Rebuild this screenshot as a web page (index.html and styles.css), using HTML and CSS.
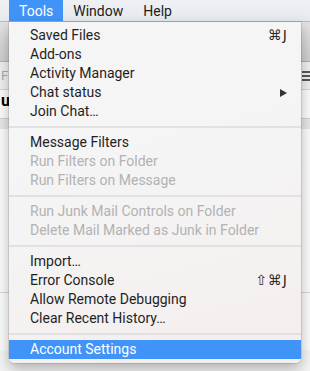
FILE: index.html
```html
<!DOCTYPE html>
<html lang="en">
<head>
  <meta charset="UTF-8">
  <title>Tools menu</title>
  <link rel="stylesheet" href="styles.css">
</head>
<body>
  <div class="menubar">
    <span class="menu-title active">Tools</span>
    <span class="menu-title">Window</span>
    <span class="menu-title">Help</span>
  </div>

  <div class="window">
    <div class="toolbar"></div>
    <div class="searchrow">
      <span class="search-text">Fil</span>
      <span class="hamburger"><i></i><i></i><i></i></span>
    </div>
    <div class="content">
      <div class="heading">u</div>
      <div class="band"></div>
      <div class="list-line"></div>
    </div>
  </div>

  <div class="menu">
    <div class="item">Saved Files<span class="key">⌘J</span></div>
    <div class="item">Add-ons</div>
    <div class="item">Activity Manager</div>
    <div class="item">Chat status<span class="arrow"></span></div>
    <div class="item">Join Chat…</div>
    <div class="sep"></div>
    <div class="item">Message Filters</div>
    <div class="item disabled">Run Filters on Folder</div>
    <div class="item disabled">Run Filters on Message</div>
    <div class="sep"></div>
    <div class="item disabled">Run Junk Mail Controls on Folder</div>
    <div class="item disabled">Delete Mail Marked as Junk in Folder</div>
    <div class="sep"></div>
    <div class="item">Import…</div>
    <div class="item">Error Console<span class="key">⇧⌘J</span></div>
    <div class="item">Allow Remote Debugging</div>
    <div class="item">Clear Recent History…</div>
    <div class="sep"></div>
    <div class="item selected">Account Settings</div>
  </div>
</body>
</html>
```

FILE: styles.css
```css
body {
  margin: 0;
  width: 310px;
  height: 371px;
  overflow: hidden;
  position: relative;
  font-family: Roboto, "Liberation Sans", sans-serif;
  font-size: 14px;
  color: #222;
  background: #f4f4f4;
}
.menubar {
  height: 22px;
  display: flex;
  padding-left: 9px;
  background: linear-gradient(#eff1f4, #e6e9ed);
  border-bottom: 1px solid #b9b9b9;
  box-sizing: border-box;
}
.menu-title {
  padding: 0 10px;
  line-height: 22px;
  font-size: 14px;
  color: #1c1c1c;
}
.menu-title.active {
  background: #4194f7;
  color: white;
}
.window {
  height: 349px;
}
.toolbar {
  height: 39px;
  background: linear-gradient(#e2e2e2, #cdcdcd);
  border-bottom: 1px solid #b0b0b0;
}
.searchrow {
  height: 27px;
  display: flex;
  align-items: center;
  justify-content: space-between;
  background: #efefef;
  border-bottom: 1px solid #d6d6d6;
}
.search-text {
  color: #a9a9a9;
  font-size: 13px;
  margin-left: 1px;
}
.hamburger {
  display: flex;
  flex-direction: column;
  gap: 2px;
  width: 8px;
}
.hamburger i {
  display: block;
  height: 2px;
  background: #555;
}
.content {
  background: #fbfbfb;
  height: 260px;
}
.heading {
  font-weight: bold;
  font-size: 16px;
  color: #000;
  padding-top: 1px;
  margin-left: 1px;
  height: 27px;
}
.band {
  height: 10px;
  background: #e6e6e6;
  border-top: 1px solid #d0d0d0;
}
.list-line {
  margin-top: 163px;
  height: 1px;
  background: #d4d4d4;
}
.menu {
  position: absolute;
  top: 22px;
  left: 9px;
  width: 292px;
  padding: 4px 0;
  background: linear-gradient(165deg, #f5f5f6 35%, #f4eeec 100%);
  border-radius: 0 0 5px 5px;
  box-shadow: 0 0 0 0.5px rgba(0, 0, 0, 0.2), 0 6px 14px rgba(0, 0, 0, 0.28);
}
.item {
  height: 19px;
  line-height: 19px;
  padding: 0 14px 0 21px;
  display: flex;
  justify-content: space-between;
  align-items: center;
  color: #1f1f1f;
}
.item.disabled {
  color: #b2b2b2;
}
.item.selected {
  background: #4194f7;
  color: white;
}
.key {
  font-family: "DejaVu Sans", sans-serif;
  font-size: 14px;
  letter-spacing: 1px;
  margin-right: -1px;
  color: #2a2a2a;
}
.arrow {
  width: 0;
  height: 0;
  border-top: 4.5px solid transparent;
  border-bottom: 4.5px solid transparent;
  border-left: 7px solid #333;
}
.sep {
  height: 2px;
  margin: 5px 0;
  background: #e1e1e1;
}
```
